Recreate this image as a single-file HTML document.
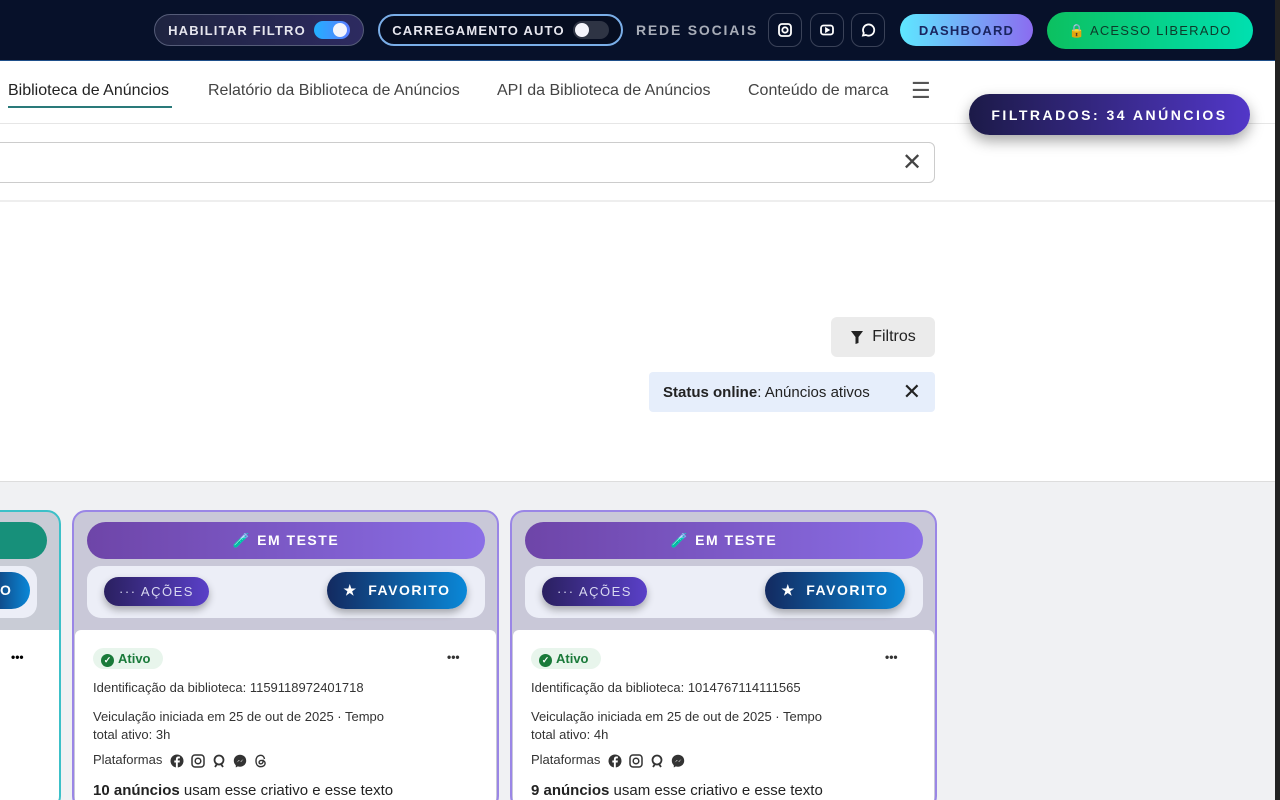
<!DOCTYPE html><html><head><meta charset="utf-8"><style>
*{box-sizing:border-box;margin:0;padding:0}
html{width:1280px;height:800px;overflow:hidden}
body{width:1280px;height:800px;overflow:hidden;font-family:"Liberation Sans",Arial,sans-serif;background:#f0f1f3;position:relative}
.abs{position:absolute}
.top{left:0;top:0;width:1280px;height:61px;background:#07112a;border-bottom:1px solid #1f4f8a}
.pill{position:absolute;height:32px;border-radius:16px;font-weight:bold;font-size:13px;letter-spacing:1.2px;display:flex;align-items:center;justify-content:center}
.tog{width:36px;height:18px;border-radius:9px;position:relative;margin-left:8px}
.tog i{position:absolute;top:2px;width:14px;height:14px;border-radius:7px;background:#f4f4fb}
.soc{position:absolute;top:13px;width:34px;height:34px;border:1px solid #3a4258;border-radius:10px;display:flex;align-items:center;justify-content:center}
.nav{left:0;top:61px;width:1275px;height:63px;background:#fff;border-bottom:1px solid #e6e6e6}
.nav span{position:absolute;top:21px;font-size:16px;color:#444}
.card{position:absolute;top:510px;width:427px;height:300px;border:2px solid #9a86e6;border-radius:14px;background:#c9c8d8;overflow:hidden}
.banner{position:absolute;left:13px;top:10px;width:398px;height:37px;border-radius:19px;background:linear-gradient(90deg,#6e45a8,#8a6ee6);color:#fff;font-weight:bold;font-size:14px;letter-spacing:1.5px;display:flex;align-items:center;justify-content:center}
.bar{position:absolute;left:13px;top:54px;width:398px;height:52px;border-radius:14px;background:#eceef7}
.acoes{position:absolute;left:17px;top:11px;width:105px;height:29px;border-radius:15px;background:linear-gradient(90deg,#2a2060,#5a40c8);color:#d8d8f0;font-size:13px;letter-spacing:1.5px;display:flex;align-items:center;justify-content:center;box-shadow:0 4px 8px rgba(0,0,0,.3)}
.fav{position:absolute;left:240px;top:6px;width:140px;height:37px;border-radius:19px;background:linear-gradient(90deg,#132a60,#0a88d8);color:#fff;font-weight:bold;font-size:14px;letter-spacing:1.5px;display:flex;align-items:center;justify-content:center;box-shadow:0 4px 8px rgba(0,0,0,.3)}
.body{position:absolute;left:1px;top:118px;width:421px;height:200px;background:#fff;border-radius:6px 6px 0 0;font-size:13px;color:#333}
.body p{position:absolute;left:18px}
.pl{display:inline-flex;gap:7px;vertical-align:middle;margin-left:8px}
</style></head><body>
<div class="abs top">
 <div class="pill" style="left:154px;top:14px;width:210px;background:linear-gradient(90deg,#1e2440,#2d2a60);border:1px solid #555c78;color:#e6e6ee">HABILITAR FILTRO<div class="tog" style="background:linear-gradient(90deg,#22b0ff,#5b7cff)"><i style="right:3px"></i></div></div>
 <div class="pill" style="left:378px;top:14px;width:245px;background:#060d20;border:2px solid #7aaee8;color:#e6e6ee">CARREGAMENTO AUTO<div class="tog" style="background:#2e3444"><i style="left:2px"></i></div></div>
 <div class="abs" style="left:636px;top:22px;font-size:14px;font-weight:bold;letter-spacing:1.8px;color:#a8adb8">REDE SOCIAIS</div>
 <div class="soc" style="left:768px"><svg width="16" height="16" viewBox="0 0 16 16" fill="none" stroke="#fff" stroke-width="1.8"><rect x="2" y="2" width="12" height="12" rx="3"/><circle cx="8" cy="8" r="2.7"/></svg></div>
 <div class="soc" style="left:810px"><svg width="16" height="16" viewBox="0 0 16 16" fill="none" stroke="#fff" stroke-width="1.8"><rect x="2" y="3.5" width="12" height="9" rx="2.5"/><path d="M7 6.5v3l2.5-1.5z" fill="#fff"/></svg></div>
 <div class="soc" style="left:851px"><svg width="16" height="16" viewBox="0 0 16 16" fill="none" stroke="#fff" stroke-width="1.8"><path d="M3 13.5l.8-2.6A5.6 5.6 0 1 1 6 13z"/></svg></div>
 <div class="pill" style="left:900px;top:14px;width:133px;background:linear-gradient(90deg,#5ee8ff,#8b6cf0);color:#1a2560">DASHBOARD</div>
 <div class="pill" style="left:1047px;top:12px;width:206px;height:37px;border-radius:19px;background:linear-gradient(90deg,#0cc060,#00e0b0);color:#0d3a2a;font-weight:normal">🔒 ACESSO LIBERADO</div>
</div>
<div class="abs nav">
 <span style="left:8px;color:#222">Biblioteca de Anúncios</span>
 <div class="abs" style="left:8px;top:45px;width:164px;height:2px;background:#2a7a7a"></div>
 <span style="left:208px">Relatório da Biblioteca de Anúncios</span>
 <span style="left:497px">API da Biblioteca de Anúncios</span>
 <span style="left:748px">Conteúdo de marca</span>
 <span style="left:911px;top:17px;font-size:22px;color:#555">☰</span>
</div>
<div class="abs" style="left:0;top:124px;width:1275px;height:358px;background:#fff;border-bottom:1px solid #ddd"></div>
<div class="abs" style="left:0;top:200px;width:1275px;height:2px;background:#eee"></div>
<div class="abs" style="left:-10px;top:142px;width:945px;height:41px;border:1px solid #ccc;border-radius:6px;background:#fff"></div>
<div class="abs" style="left:902px;top:148px;font-size:24px;color:#444">✕</div>
<div class="pill" style="left:969px;top:94px;width:281px;height:41px;border-radius:21px;background:linear-gradient(90deg,#1c1a48,#5237c8);color:#fff;font-size:14px;letter-spacing:2.5px;box-shadow:0 6px 14px rgba(0,0,0,.35)">FILTRADOS: 34 ANÚNCIOS</div>
<div class="abs" style="left:831px;top:317px;width:104px;height:40px;background:#ebebeb;border-radius:6px;font-size:16px;color:#222;display:flex;align-items:center;justify-content:center;gap:8px"><svg width="14" height="15" viewBox="0 0 14 15"><path d="M1 1h12L8.5 7v6L5.5 14V7z" fill="#222"/></svg>Filtros</div>
<div class="abs" style="left:649px;top:372px;width:286px;height:40px;background:#e6eefb;border-radius:4px;font-size:15px;color:#222;padding:12px 14px"><b>Status online</b>: Anúncios ativos<span style="position:absolute;right:14px;top:7px;font-size:22px">✕</span></div>
<div class="abs" style="left:-20px;top:510px;width:81px;height:300px;border:2px solid #3cc0c8;border-radius:14px;background:#c9ccd6;overflow:hidden">
 <div class="abs" style="left:0;top:10px;width:65px;height:37px;border-radius:19px;background:#17907a"></div>
 <div class="abs" style="left:0;top:54px;width:55px;height:52px;border-radius:14px;background:#eceef7"><div class="abs" style="left:0;top:6px;width:48px;height:37px;border-radius:19px;background:linear-gradient(90deg,#132a60,#0a88d8);color:#fff;font-weight:bold;font-size:14px;padding:10px 0 0 18px">O</div></div>
 <div class="abs" style="left:0;top:118px;width:77px;height:200px;background:#fff"><div class="abs" style="left:29px;top:20px;font-weight:bold;font-size:12px">•••</div></div>
</div>
<div class="card" style="left:72px">
 <div class="banner">🧪 EM TESTE</div>
 <div class="bar"><div class="acoes">··· AÇÕES</div><div class="fav">★&nbsp; FAVORITO</div></div>
 <div class="body">
  <div class="abs" style="left:18px;top:18px;height:21px;width:70px;border-radius:11px;background:#e8f5ec;color:#1a7a3a;font-weight:bold;font-size:13px;padding:3px 0 0 8px"><span style="display:inline-block;width:13px;height:13px;border-radius:7px;background:#1a7a3a;color:#fff;font-size:9px;text-align:center;line-height:13px;margin-right:4px">✓</span>Ativo</div>
  <div class="abs" style="left:372px;top:20px;font-weight:bold;font-size:12px">•••</div>
  <p style="top:50px">Identificação da biblioteca: 1159118972401718</p>
  <p style="top:78px;line-height:18px">Veiculação iniciada em 25 de out de 2025 · Tempo<br>total ativo: 3h</p>
  <p style="top:122px">Plataformas<span class="pl">
   <svg width="14" height="14" viewBox="0 0 14 14"><circle cx="7" cy="7" r="6.5" fill="#333"/><path d="M7.8 14V8.5h1.8l.3-2H7.8V5.4c0-.6.2-1 1-1h1.1V2.6c-.2 0-.8-.1-1.5-.1-1.5 0-2.5.9-2.5 2.6v1.4H4.3v2h1.6V14z" fill="#fff"/></svg>
   <svg width="14" height="14" viewBox="0 0 14 14" fill="none" stroke="#333" stroke-width="1.5"><rect x="1" y="1" width="12" height="12" rx="3"/><circle cx="7" cy="7" r="2.8"/></svg>
   <svg width="14" height="14" viewBox="0 0 14 14" fill="none" stroke="#333" stroke-width="1.8"><circle cx="7" cy="6" r="4.5"/><path d="M3 13l2-3M11 13l-2-3"/></svg>
   <svg width="14" height="14" viewBox="0 0 14 14"><path d="M7 .8C3.5.8.8 3.4.8 6.8c0 1.8.8 3.3 2 4.4V13.5l2-1.1c.7.2 1.4.3 2.2.3 3.5 0 6.2-2.6 6.2-6S10.5.8 7 .8z" fill="#333"/><path d="M3.5 8.5L6 6l1.5 1.5L10.5 5 8 8 6.5 6.5z" fill="#fff"/></svg>
   <svg width="14" height="14" viewBox="0 0 14 14" fill="none" stroke="#333" stroke-width="1.4"><path d="M10.5 5C10 2.5 8.5 1.3 6.8 1.3 3.8 1.3 2 3.6 2 7s1.8 5.7 4.8 5.7c2.5 0 4.3-1.5 4.3-3.5 0-2-1.8-2.8-3.5-2.8-1.5 0-2.5.8-2.5 1.9 0 1 .8 1.6 1.8 1.6 1.6 0 2.4-1.4 2.2-4.2"/></svg>
  </span></p>
  <p style="top:152px;font-size:15px;color:#222"><b>10 anúncios</b> usam esse criativo e esse texto</p>
 </div>
</div>
<div class="card" style="left:510px">
 <div class="banner">🧪 EM TESTE</div>
 <div class="bar"><div class="acoes">··· AÇÕES</div><div class="fav">★&nbsp; FAVORITO</div></div>
 <div class="body">
  <div class="abs" style="left:18px;top:18px;height:21px;width:70px;border-radius:11px;background:#e8f5ec;color:#1a7a3a;font-weight:bold;font-size:13px;padding:3px 0 0 8px"><span style="display:inline-block;width:13px;height:13px;border-radius:7px;background:#1a7a3a;color:#fff;font-size:9px;text-align:center;line-height:13px;margin-right:4px">✓</span>Ativo</div>
  <div class="abs" style="left:372px;top:20px;font-weight:bold;font-size:12px">•••</div>
  <p style="top:50px">Identificação da biblioteca: 1014767114111565</p>
  <p style="top:78px;line-height:18px">Veiculação iniciada em 25 de out de 2025 · Tempo<br>total ativo: 4h</p>
  <p style="top:122px">Plataformas<span class="pl">
   <svg width="14" height="14" viewBox="0 0 14 14"><circle cx="7" cy="7" r="6.5" fill="#333"/><path d="M7.8 14V8.5h1.8l.3-2H7.8V5.4c0-.6.2-1 1-1h1.1V2.6c-.2 0-.8-.1-1.5-.1-1.5 0-2.5.9-2.5 2.6v1.4H4.3v2h1.6V14z" fill="#fff"/></svg>
   <svg width="14" height="14" viewBox="0 0 14 14" fill="none" stroke="#333" stroke-width="1.5"><rect x="1" y="1" width="12" height="12" rx="3"/><circle cx="7" cy="7" r="2.8"/></svg>
   <svg width="14" height="14" viewBox="0 0 14 14" fill="none" stroke="#333" stroke-width="1.8"><circle cx="7" cy="6" r="4.5"/><path d="M3 13l2-3M11 13l-2-3"/></svg>
   <svg width="14" height="14" viewBox="0 0 14 14"><path d="M7 .8C3.5.8.8 3.4.8 6.8c0 1.8.8 3.3 2 4.4V13.5l2-1.1c.7.2 1.4.3 2.2.3 3.5 0 6.2-2.6 6.2-6S10.5.8 7 .8z" fill="#333"/><path d="M3.5 8.5L6 6l1.5 1.5L10.5 5 8 8 6.5 6.5z" fill="#fff"/></svg>
  </span></p>
  <p style="top:152px;font-size:15px;color:#222"><b>9 anúncios</b> usam esse criativo e esse texto</p>
 </div>
</div>
<div class="abs" style="left:1275px;top:0;width:5px;height:800px;background:#222"></div>
</body></html>
